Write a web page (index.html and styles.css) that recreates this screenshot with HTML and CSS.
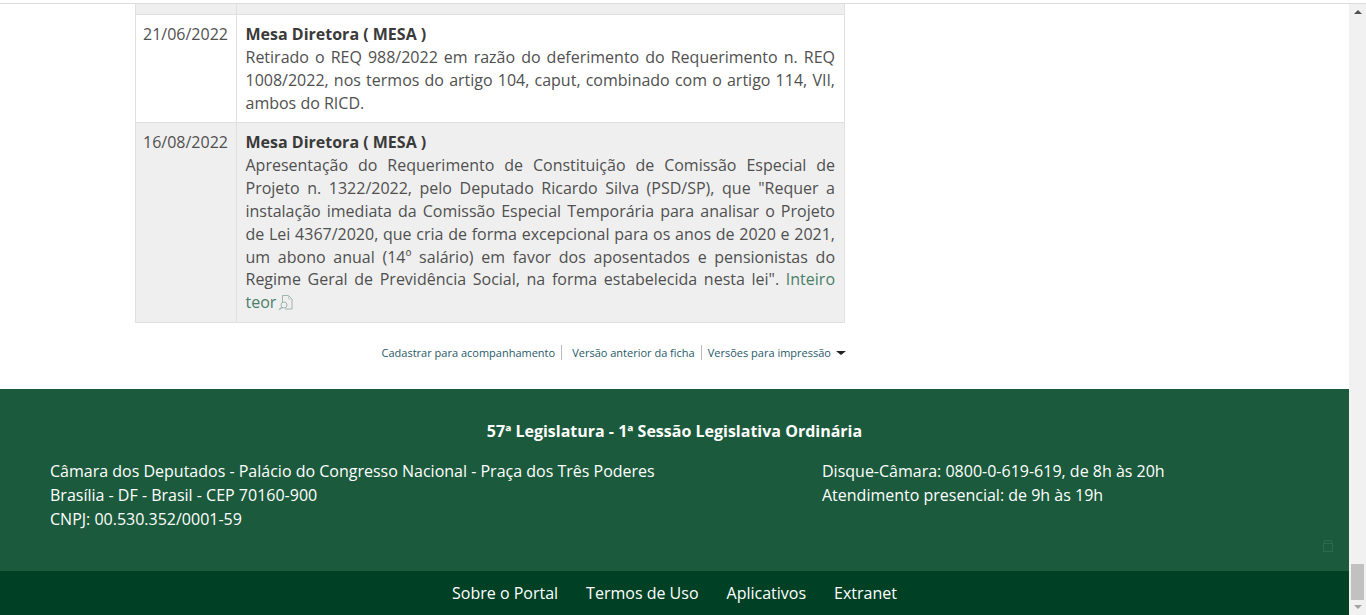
FILE: index.html
```html
<!DOCTYPE html>
<html lang="pt-BR">
<head>
  <meta charset="UTF-8" />
  <title>Ficha de tramitação</title>
  <link rel="stylesheet" href="styles.css">
</head>
<body>
<div class="window">
  <div class="page">
    <main class="content">
      <table class="historico">
        <tr class="even stub"><td class="data"></td><td class="texto"></td></tr>
        <tr>
          <td class="data">21/06/2022</td>
          <td class="texto">
            <strong>Mesa Diretora ( MESA )</strong><br>
            Retirado o REQ 988/2022 em razão do deferimento do Requerimento n. REQ 1008/2022, nos termos do artigo 104, caput, combinado com o artigo 114, VII, ambos do RICD.
          </td>
        </tr>
        <tr class="even">
          <td class="data">16/08/2022</td>
          <td class="texto">
            <strong>Mesa Diretora ( MESA )</strong><br>
            Apresentação do Requerimento de Constituição de Comissão Especial de Projeto n. 1322/2022, pelo Deputado Ricardo Silva (PSD/SP), que "Requer a instalação imediata da Comissão Especial Temporária para analisar o Projeto de Lei 4367/2020, que cria de forma excepcional para os anos de 2020 e 2021, um abono anual (14º salário) em favor dos aposentados e pensionistas do Regime Geral de Previdência Social, na forma estabelecida nesta lei". <a href="#">Inteiro teor</a>
            <svg class="doc-icon" width="16" height="16" viewBox="0 0 16 16" fill="none" stroke="#9fb5ad" stroke-width="1">
              <path d="M4.5 8V.5h6l3.5 3.5v10H7"/>
              <path d="M10.5 .5V4H14" stroke="#c3cfca"/>
              <circle cx="6" cy="10" r="3"/>
              <path d="M3.8 12.2l-2.6 2.6" stroke-width="1.4"/>
            </svg>
          </td>
        </tr>
      </table>
      <nav class="acoes">
        <a href="#" class="acao sep">Cadastrar para acompanhamento</a>
        <a href="#" class="acao sep anterior">Versão anterior da ficha</a>
        <a href="#" class="acao">Versões para impressão</a>
        <span class="caret"></span>
      </nav>
    </main>

    <footer class="rodape">
      <div class="rodape-info">
        <h2>57ª Legislatura - 1ª Sessão Legislativa Ordinária</h2>
        <div class="colunas">
          <address>
            Câmara dos Deputados - Palácio do Congresso Nacional - Praça dos Três Poderes<br>
            Brasília - DF - Brasil - CEP 70160-900<br>
            CNPJ: 00.530.352/0001-59
          </address>
          <address class="contato">
            Disque-Câmara: 0800-0-619-619, de 8h às 20h<br>
            Atendimento presencial: de 9h às 19h
          </address>
        </div>
        <svg class="topo" width="10" height="12" viewBox="0 0 10 12" fill="none" stroke="#2b6b4c">
          <path d="M.5 3.5h9v8h-9zM1.5 3.5V.5h7v3"/>
        </svg>
      </div>
      <ul class="rodape-links">
        <li><a href="#">Sobre o Portal</a></li>
        <li><a href="#">Termos de Uso</a></li>
        <li><a href="#">Aplicativos</a></li>
        <li><a href="#">Extranet</a></li>
      </ul>
    </footer>
  </div>

  <div class="scrollbar">
    <span class="seta cima"></span>
    <div class="trilho"><div class="thumb"></div></div>
    <span class="seta baixo"></span>
  </div>
</div>
</body>
</html>
```

FILE: styles.css
```css
html, body {
  height: 100%;
}

body {
  margin: 0;
  overflow: hidden;
  background: #fff;
  font-family: "Open Sans", Arial, sans-serif;
  font-size: 16px;
  color: #505050;
}

.window {
  display: flex;
  height: 615px;
  padding-top: 3px;
  box-sizing: border-box;
}

.page {
  flex: 1;
  display: flex;
  flex-direction: column;
  border-top: 1px solid #dcdcdc;
  min-width: 0;
}

.content {
  height: 385px;
  padding-left: 135px;
  box-sizing: border-box;
}

.historico {
  width: 710px;
  border-collapse: collapse;
  line-height: 1.42857;
}

.historico td {
  border: 1px solid #e0e0e0;
  border-top: 0;
  vertical-align: top;
  padding: 8.5px 9px 7.5px 8.5px;
}

.historico tr + tr td {
  border-top: 1px solid #e0e0e0;
}

.historico tr.even td {
  background: #efefef;
}

.historico tr.stub td {
  height: 10px;
  padding: 0;
  box-sizing: border-box;
}

.historico .data {
  width: 101px;
  box-sizing: border-box;
  padding-left: 7px;
  padding-right: 0;
  white-space: nowrap;
}

.historico .texto {
  text-align: justify;
}

.historico strong {
  color: #3a3a3a;
}

.historico a {
  color: #4a8068;
  text-decoration: none;
}

.doc-icon {
  vertical-align: -3px;
  margin: -4px 0 0 -3px;
}

.acoes {
  display: flex;
  justify-content: flex-end;
  align-items: center;
  margin-top: 22px;
  width: 711px;
  height: 16px;
  font-size: 11px;
}

.acao {
  color: #1f5a68;
  text-decoration: none;
  white-space: nowrap;
}

.acao.sep {
  border-right: 1px solid #bbb;
  padding-right: 6px;
  margin-right: 6px;
  line-height: 15px;
}

.acao.anterior {
  margin-left: 4px;
}

.caret {
  margin-left: 5px;
  border-left: 5px solid transparent;
  border-right: 5px solid transparent;
  border-top: 4px solid #222;
}

.rodape {
  color: #fff;
}

.rodape-info {
  position: relative;
  height: 182px;
  box-sizing: border-box;
  padding: 30px 50px 0;
  background: #1b5a3c;
}

.rodape-info h2 {
  margin: 0 0 16px;
  font-size: 16px;
  line-height: 24px;
  font-weight: 700;
  text-align: center;
}

.colunas {
  display: flex;
  line-height: 24px;
}

.colunas address {
  font-style: normal;
  width: 772px;
}

.colunas .contato {
  width: auto;
}

.topo {
  position: absolute;
  right: 16px;
  top: 151px;
}

.rodape-links {
  display: flex;
  justify-content: center;
  gap: 28px;
  height: 44px;
  margin: 0;
  padding: 0;
  list-style: none;
  align-items: center;
  background: #004125;
}

.rodape-links a {
  color: #fff;
  text-decoration: none;
}

.scrollbar {
  width: 17px;
  flex: none;
  display: flex;
  flex-direction: column;
  align-items: center;
  background: #f1f1f1;
  border-top: 1px solid #dcdcdc;
}

.seta {
  flex: none;
  width: 0;
  height: 0;
  border-left: 4px solid transparent;
  border-right: 4px solid transparent;
}

.seta.cima {
  margin: 6px 0 5px;
  border-bottom: 4px solid #505050;
}

.seta.baixo {
  margin: 5px 0 6px;
  border-top: 4px solid #a3a3a3;
}

.trilho {
  flex: 1;
  width: 100%;
  display: flex;
  flex-direction: column;
  justify-content: flex-end;
  align-items: center;
}

.thumb {
  width: 13px;
  height: 36px;
  background: #c1c1c1;
}
```
